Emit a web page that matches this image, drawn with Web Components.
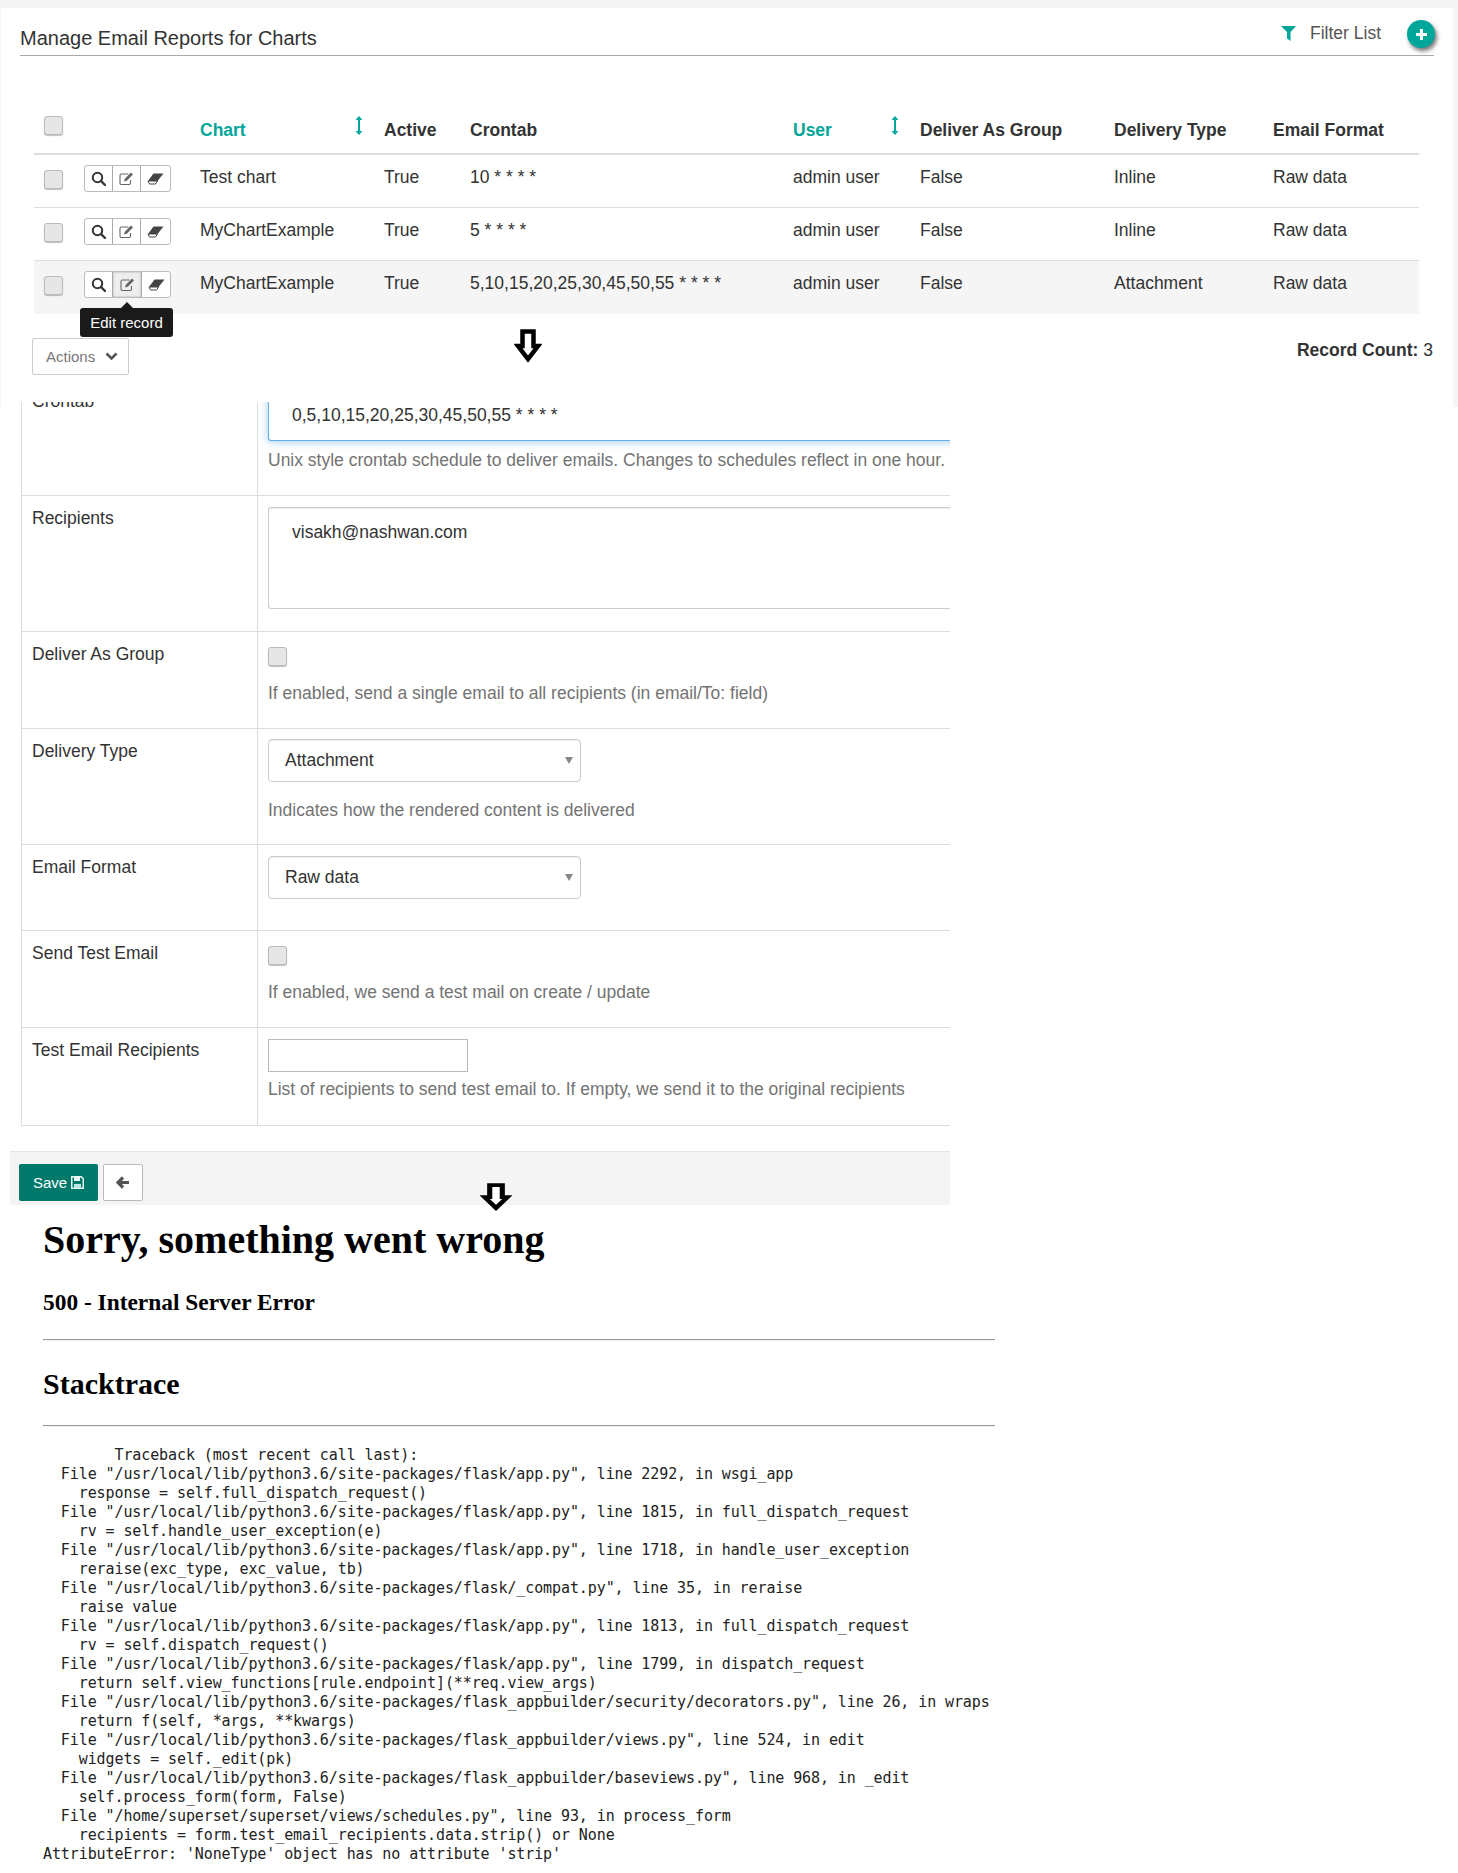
<!DOCTYPE html>
<html>
<head>
<meta charset="utf-8">
<title>Email Reports</title>
<style>
  html, body { margin: 0; background: #fff; }
  body { font-family: "Liberation Sans", Arial, sans-serif; width: 1458px; height: 1873px; overflow: hidden; position: relative; }
</style>
</head>
<body>

<list-panel title-text="Manage Email Reports for Charts"></list-panel>
<form-panel></form-panel>
<error-page></error-page>

<down-arrow style="left:514px;top:329px;width:28px;height:35px"></down-arrow>
<down-arrow style="left:480px;top:1183px;width:32px;height:29px"></down-arrow>

<script>
const BOX_STYLE = `
  .check {
    display: block; box-sizing: border-box; width: 19px; height: 19px;
    border: 1px solid #bbb; border-radius: 3px; background: #e6e6e6;
    box-shadow: 0 1px 1px rgba(0,0,0,.25);
  }
`;

class DownArrow extends HTMLElement {
  constructor() {
    super();
    this.attachShadow({ mode: 'open' }).innerHTML = `
      <style>:host { position: absolute; display: block; z-index: 5; } svg { display: block; width: 100%; height: 100%; }</style>
      <svg viewBox="0 0 28 35" preserveAspectRatio="none"><path d="M8.500 2.500H19.500V17H24L14 30 4 17H8.500z" fill="#fff" stroke="#000" stroke-width="4.500"/></svg>`;
  }
}
customElements.define('down-arrow', DownArrow);

class RowActions extends HTMLElement {
  constructor() {
    super();
    const on = this.hasAttribute('active');
    this.attachShadow({ mode: 'open' }).innerHTML = `
      <style>
        :host { display: flex; width: 87px; height: 27px; box-sizing: border-box; border: 1px solid #bbb; border-radius: 3px; background: #fff; position: relative; }
        span { display: flex; align-items: center; justify-content: center; box-sizing: border-box; }
        .a { width: 27px; }
        .b { width: ${on ? 30 : 28}px; border-left: 1px solid #aaa; ${on ? 'background:#eee;box-shadow:inset 0 0 2px #999;border-right:1px solid #aaa;' : ''} }
        .c { flex: 1; ${on ? '' : 'border-left:1px solid #aaa;'} }
        svg { display: block; }
      </style>
      <span class="a"><svg width="15" height="15" viewBox="0 0 15 15"><circle cx="6.500" cy="6.500" r="4.700" fill="none" stroke="#333" stroke-width="2"/><path d="M10 10l4 4" stroke="#333" stroke-width="2.400" stroke-linecap="round"/></svg></span>
      <span class="b"><svg width="15" height="13" viewBox="0 0 15 13"><path d="M9.500 2H2.500a1.500 1.500 0 0 0-1.500 1.500v7.500a1.500 1.500 0 0 0 1.500 1.500H10a1.500 1.500 0 0 0 1.500-1.500V8" fill="none" stroke="#666" stroke-width="1.100"/><path d="M5 9.500l.8-2.700L12 .5l2 2-6.200 6.200z" fill="#666"/></svg></span>
      <span class="c"><svg width="17" height="12" viewBox="0 0 17 12"><path d="M6.500 .5H16.500L10.500 8H1z" fill="#444"/><path d="M1 8h9.500l-2 3H2.500z" fill="#fff" stroke="#444" stroke-width="1"/></svg></span>`;
  }
}
customElements.define('row-actions', RowActions);

class SortIcon extends HTMLElement {
  constructor() {
    super();
    this.attachShadow({ mode: 'open' }).innerHTML = `
      <style>:host { position: absolute; top: 116px; display: block; line-height: 0; }</style>
      <svg width="8" height="19" viewBox="0 0 8 19"><path d="M4 0l3.500 4H5v11h2.500L4 19 .5 15H3V4H.5z" fill="#00a699"/></svg>`;
  }
}
customElements.define('sort-icon', SortIcon);

class ListPanel extends HTMLElement {
  constructor() {
    super();
    const cols = ['40px', '116px', '184px', '86px', '323px', '127px', '194px', '159px', '156px'].join(' ');
    const rows = [
      ['Test chart', '10 * * * *', 'Inline'],
      ['MyChartExample', '5 * * * *', 'Inline'],
      ['MyChartExample', '5,10,15,20,25,30,45,50,55 * * * *', 'Attachment'],
    ];
    const rowHtml = rows.map((r, i) => `
      <div class="row${i == 2 ? ' hover' : ''}">
        <div class="cell box"><span class="check"></span></div>
        <div class="cell acts"><row-actions${i == 2 ? ' active' : ''}></row-actions></div>
        <div class="cell">${r[0]}</div>
        <div class="cell">True</div>
        <div class="cell">${r[1]}</div>
        <div class="cell">admin user</div>
        <div class="cell">False</div>
        <div class="cell">${r[2]}</div>
        <div class="cell">Raw data</div>
      </div>`).join('');
    this.attachShadow({ mode: 'open' }).innerHTML = `
      <style>
        ${BOX_STYLE}
        :host { display: block; position: relative; box-sizing: border-box; height: 407px; padding: 8px 5px 0 1px; background: #f5f5f5; color: #333; font-size: 17.500px; }
        .inner { background: #fff; height: 399px; padding: 0 19px 0 19px; box-sizing: border-box; }
        .head { display: flex; align-items: flex-start; height: 48px; box-sizing: border-box; border-bottom: 1px solid #aaa; }
        h1 { margin: 0; padding-top: 19px; font: 400 20px/22px "Liberation Sans", Arial, sans-serif; color: #333; flex: 1; }
        .filter { display: flex; align-items: center; gap: 14px; height: 34px; color: #555; margin-top: 8px; margin-right: 26px; }
        .filter svg { display: block; margin-top: 1px; }
        .plus { width: 28px; height: 28px; margin-top: 12px; border-radius: 50%; background: #00a699; box-shadow: 2px 3px 4px rgba(0,0,0,.55); display: flex; align-items: center; justify-content: center; margin-right: -1px; }
        .table { margin: 51px 0 0 14px; width: 1385px; }
        .row { display: grid; grid-template-columns: ${cols}; height: 53px; border-bottom: 1px solid #ddd; box-sizing: border-box; }
        .row:last-child { border-bottom: 0; }
        .row.hover { background: #f5f5f5; }
        .row.th { height: 48px; border-bottom: 2px solid #ddd; font-weight: 700; }
        .cell { padding: 11px 10px 0; white-space: nowrap; line-height: 22px; }
        .th .cell { padding-top: 12px; }
        .th .box { padding-top: 9px; }
        .box { padding-top: 15px; }
        .acts { padding: 10px 10px 0; }
        .teal { color: #00a699; }
        .foot { display: flex; justify-content: space-between; margin: 24px 1px 0 12px; }
        .actions { display: flex; align-items: center; justify-content: space-between; box-sizing: border-box; width: 97px; height: 37px; border: 1px solid #ccc; border-radius: 2px; padding: 0 10px 0 13px; font-size: 15px; color: #777; background: #fff; }
        .count { font-weight: 700; margin-top: 1px; line-height: 22px; }
        .count span { font-weight: 400; }
        .tip { position: absolute; left: 80px; top: 308px; width: 93px; height: 29px; background: #1a1a1a; color: #fff; border-radius: 3px; font-size: 15px; line-height: 29px; text-align: center; z-index: 3; }
        .tip::before { content: ""; position: absolute; left: 41px; top: -6px; border: 6px solid transparent; border-top: 0; border-bottom-color: #1a1a1a; }
      </style>
      <div class="inner">
        <div class="head">
          <h1>${this.getAttribute('title-text')}</h1>
          <div class="filter">
            <svg width="15" height="15" viewBox="0 0 15 15"><path d="M0 0h15L9.500 6v9L6 12.500V6z" fill="#00a699"/></svg>
            <span>Filter List</span>
          </div>
          <div class="plus"><svg width="11" height="11" viewBox="0 0 11 11"><path d="M4 0h3v4h4v3H7v4H4V7H0V4h4z" fill="#fff"/></svg></div>
        </div>
        <div class="table">
          <div class="row th">
            <div class="cell box"><span class="check"></span></div>
            <div class="cell"></div>
            <div class="cell teal">Chart</div>
            <div class="cell">Active</div>
            <div class="cell">Crontab</div>
            <div class="cell teal">User</div>
            <div class="cell">Deliver As Group</div>
            <div class="cell">Delivery Type</div>
            <div class="cell">Email Format</div>
          </div>
          ${rowHtml}
        </div>
        <div class="foot">
          <div class="actions"><span>Actions</span>
            <svg width="13" height="9" viewBox="0 0 13 9"><path d="M1.500 1.500L6.500 6.500l5-5" fill="none" stroke="#555" stroke-width="2.600"/></svg>
          </div>
          <div class="count">Record Count: <span>3</span></div>
        </div>
      </div>
      <sort-icon style="left:355px"></sort-icon>
      <sort-icon style="left:891px"></sort-icon>
      <div class="tip">Edit record</div>`;
  }
}
customElements.define('list-panel', ListPanel);

class FormRow extends HTMLElement {
  constructor() {
    super();
    this.attachShadow({ mode: 'open' }).innerHTML = `
      <style>
        :host { display: flex; box-sizing: border-box; border-bottom: 1px solid #ddd; height: var(--h); font-size: 17.500px; color: #333; }
        .label { box-sizing: border-box; width: 236px; flex: none; padding: 11px 10px 0; line-height: 22px; border-right: 1px solid #ddd; }
        .field { flex: 1; padding: 11px 10px 0; min-width: 0; }
      </style>
      <div class="label"><slot name="label"></slot></div>
      <div class="field"><slot></slot></div>`;
  }
}
customElements.define('form-row', FormRow);

class FormPanel extends HTMLElement {
  constructor() {
    super();
    this.attachShadow({ mode: 'open' }).innerHTML = `
      <style>
        ${BOX_STYLE}
        :host { display: block; position: relative; margin-top: -5px; height: 803px; overflow: hidden; color: #333; font-size: 17.500px; }
        .form { margin-left: 21px; width: 929px; border-left: 1px solid #ddd; box-sizing: border-box; margin-top: -23px; overflow: hidden; }
        .text { box-sizing: border-box; width: calc(100% + 20px); border: 1px solid #ccc; border-right: 0; border-radius: 3px 0 0 3px; padding: 13px 23px 0; line-height: 22px; background: #fff; box-shadow: inset 0 1px 1px rgba(0,0,0,.075); }
        .focus { height: 51px; border-color: #66afe9; box-shadow: 0 1px 8px rgba(102,175,233,.6); }
        .area { height: 102px; }
        .help { color: #737373; line-height: 22px; margin-top: 8px; white-space: nowrap; }
        .sel { box-sizing: border-box; display: flex; align-items: center; justify-content: space-between; width: 313px; height: 43px; border: 1px solid #ccc; border-radius: 4px; padding: 0 7px 0 16px; box-shadow: inset 0 1px 1px rgba(0,0,0,.075); }
        .sel i { width: 0; height: 0; border: 4px solid transparent; border-top: 7px solid #888; border-bottom: 0; }
        .small { box-sizing: border-box; display: block; width: 200px; height: 33px; border: 1px solid #bbb; background: #fff; }
        .check { margin-top: 4px; }
        .gap { margin-top: 16px; }
        .foot { margin-left: 10px; width: 940px; height: 54px; margin-top: 25px; background: #f4f4f4; border-top: 1px solid #e5e5e5; box-sizing: border-box; padding: 12px 9px 0; display: flex; gap: 5px; }
        .save { box-sizing: border-box; display: flex; align-items: center; justify-content: center; gap: 4px; width: 79px; height: 37px; background: #00796b; border-radius: 2px; color: #fff; font-size: 15px; }
        .back { box-sizing: border-box; display: flex; align-items: center; justify-content: center; width: 40px; height: 37px; background: #fff; border: 1px solid #bbb; border-radius: 2px; }
        svg { display: block; }
      </style>
      <div class="form">
        <form-row style="--h:117px"><span slot="label">Crontab</span>
          <div class="text focus">0,5,10,15,20,25,30,45,50,55 * * * *</div>
          <div class="help">Unix style crontab schedule to deliver emails. Changes to schedules reflect in one hour.</div>
        </form-row>
        <form-row style="--h:136px"><span slot="label">Recipients</span>
          <div class="text area">visakh@nashwan.com</div>
        </form-row>
        <form-row style="--h:97px"><span slot="label">Deliver As Group</span>
          <span class="check"></span>
          <div class="help gap">If enabled, send a single email to all recipients (in email/To: field)</div>
        </form-row>
        <form-row style="--h:116px"><span slot="label">Delivery Type</span>
          <div class="sel" style="margin-top:-1px"><span>Attachment</span><i></i></div>
          <div class="help" style="margin-top:17px">Indicates how the rendered content is delivered</div>
        </form-row>
        <form-row style="--h:86px"><span slot="label">Email Format</span>
          <div class="sel"><span>Raw data</span><i></i></div>
        </form-row>
        <form-row style="--h:97px"><span slot="label">Send Test Email</span>
          <span class="check"></span>
          <div class="help gap">If enabled, we send a test mail on create / update</div>
        </form-row>
        <form-row style="--h:98px"><span slot="label">Test Email Recipients</span>
          <span class="small"></span>
          <div class="help" style="margin-top:6px">List of recipients to send test email to. If empty, we send it to the original recipients</div>
        </form-row>
      </div>
      <div class="foot">
        <div class="save"><span>Save</span>
          <svg width="13" height="13" viewBox="0 0 13 13"><path d="M.75.75h9.500l2 2v9.500H.75z" fill="none" stroke="#e6f7f5" stroke-width="1.500"/><path d="M3 1h6v4H3z" fill="#e6f7f5"/><path d="M3 8h7v4H3z" fill="#bfe6e1"/></svg>
        </div>
        <div class="back"><svg width="14" height="13" viewBox="0 0 14 13"><path d="M7 1.500L2 6.500l5 5M3 6.500h10" fill="none" stroke="#555" stroke-width="3.200"/></svg></div>
      </div>`;
  }
}
customElements.define('form-panel', FormPanel);

class ErrorPage extends HTMLElement {
  constructor() {
    super();
    const trace = `        Traceback (most recent call last):
  File "/usr/local/lib/python3.6/site-packages/flask/app.py", line 2292, in wsgi_app
    response = self.full_dispatch_request()
  File "/usr/local/lib/python3.6/site-packages/flask/app.py", line 1815, in full_dispatch_request
    rv = self.handle_user_exception(e)
  File "/usr/local/lib/python3.6/site-packages/flask/app.py", line 1718, in handle_user_exception
    reraise(exc_type, exc_value, tb)
  File "/usr/local/lib/python3.6/site-packages/flask/_compat.py", line 35, in reraise
    raise value
  File "/usr/local/lib/python3.6/site-packages/flask/app.py", line 1813, in full_dispatch_request
    rv = self.dispatch_request()
  File "/usr/local/lib/python3.6/site-packages/flask/app.py", line 1799, in dispatch_request
    return self.view_functions[rule.endpoint](**req.view_args)
  File "/usr/local/lib/python3.6/site-packages/flask_appbuilder/security/decorators.py", line 26, in wraps
    return f(self, *args, **kwargs)
  File "/usr/local/lib/python3.6/site-packages/flask_appbuilder/views.py", line 524, in edit
    widgets = self._edit(pk)
  File "/usr/local/lib/python3.6/site-packages/flask_appbuilder/baseviews.py", line 968, in _edit
    self.process_form(form, False)
  File "/home/superset/superset/views/schedules.py", line 93, in process_form
    recipients = form.test_email_recipients.data.strip() or None
AttributeError: 'NoneType' object has no attribute 'strip'`;
    this.attachShadow({ mode: 'open' }).innerHTML = `
      <style>
        :host { display: block; width: 952px; padding-left: 43px; color: #000; font-family: "Liberation Serif", "Times New Roman", serif; }
        h1 { margin: 0; padding-top: 12px; font-size: 40px; line-height: 46px; }
        h3 { margin: 0; padding-top: 26px; font-size: 23.400px; line-height: 26px; }
        h2 { margin: 0; padding-top: 27px; font-size: 30px; line-height: 32px; }
        hr { margin: 24px 0 0; border: 0; border-top: 1px solid #999; border-bottom: 1px solid #eee; }
        h2 + hr { margin-top: 25px; }
        pre { margin: 19px 0 0; font: 15px/19px "DejaVu Sans Mono", monospace; letter-spacing: -.1px; color: #222; }
      </style>
      <h1>Sorry, something went wrong</h1>
      <h3>500 - Internal Server Error</h3>
      <hr>
      <h2>Stacktrace</h2>
      <hr>
      <pre>${trace}</pre>`;
  }
}
customElements.define('error-page', ErrorPage);
</script>
</body>
</html>
